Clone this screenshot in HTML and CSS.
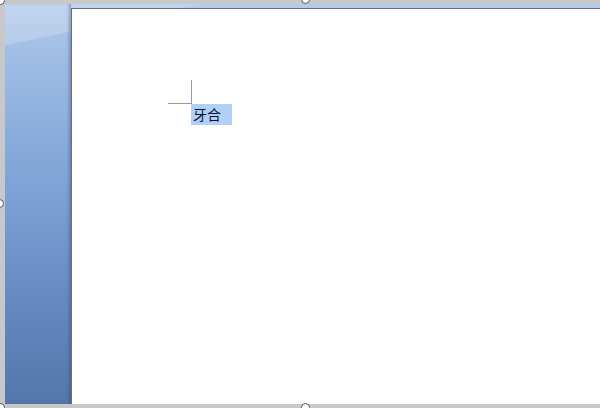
FILE: index.html
```html
<!DOCTYPE html>
<html>
<head>
<meta charset="utf-8">
<link rel="stylesheet" href="styles.css">
</head>
<body>
<div class="frame">
  <div class="desk">
    <div class="gutter"></div>
    <div class="page">
      <div class="content">
        <div class="mark"></div>
        <span class="sel">牙合</span>
      </div>
    </div>
  </div>
  <span class="handle h-tl"></span>
  <span class="handle h-tm"></span>
  <span class="handle h-ml"></span>
  <span class="handle h-bl"></span>
  <span class="handle h-bm"></span>
</div>
</body>
</html>
```
FILE: styles.css
```css
html, body {
  margin: 0;
  padding: 0;
  background: #c6c6c6;
}
.frame {
  position: relative;
  width: 600px;
  height: 408px;
  box-sizing: border-box;
  padding: 4px 0 4px 5px;
  background: #c8c8c8;
  overflow: hidden;
}
.desk {
  display: flex;
  height: 100%;
  background:
    linear-gradient(168deg, rgba(255,255,255,0.18) 0, rgba(255,255,255,0.18) 40px, rgba(255,255,255,0) 41px),
    linear-gradient(180deg, #b5cbeb 0%, #9dbbe4 15%, #7fa3d6 45%, #6489c0 75%, #5477aa 100%);
}
.gutter {
  width: 66px;
  flex: none;
  box-shadow: inset -3px 0 3px -1px rgba(40,60,100,0.35);
}
.page {
  flex: 1;
  margin-top: 4px;
  background: #fff;
  border-top: 1px solid #6a6f78;
  border-left: 1px solid #6a6f78;
}
.content {
  padding: 71px 0 0 96px;
}
.mark {
  width: 23px;
  height: 23px;
  border-right: 1px solid #9a9a9a;
  border-bottom: 1px solid #9a9a9a;
}
.sel {
  display: inline-block;
  margin-left: 23px;
  width: 39px;
  height: 21px;
  padding-left: 2px;
  background: #b0d0f8;
  color: #0a1230;
  font-family: "Noto Sans CJK SC", "Liberation Sans", sans-serif;
  font-size: 14px;
  line-height: 21px;
}
.handle {
  position: absolute;
  width: 7px;
  height: 7px;
  border-radius: 50%;
  background: #fff;
  border: 1px solid #555;
}
.h-tl { left: -4px; top: -4px; }
.h-tm { left: 301px; top: -5px; }
.h-ml { left: -5px; top: 199px; }
.h-bl { left: -4px; top: 403px; }
.h-bm { left: 301px; top: 403px; }
```
